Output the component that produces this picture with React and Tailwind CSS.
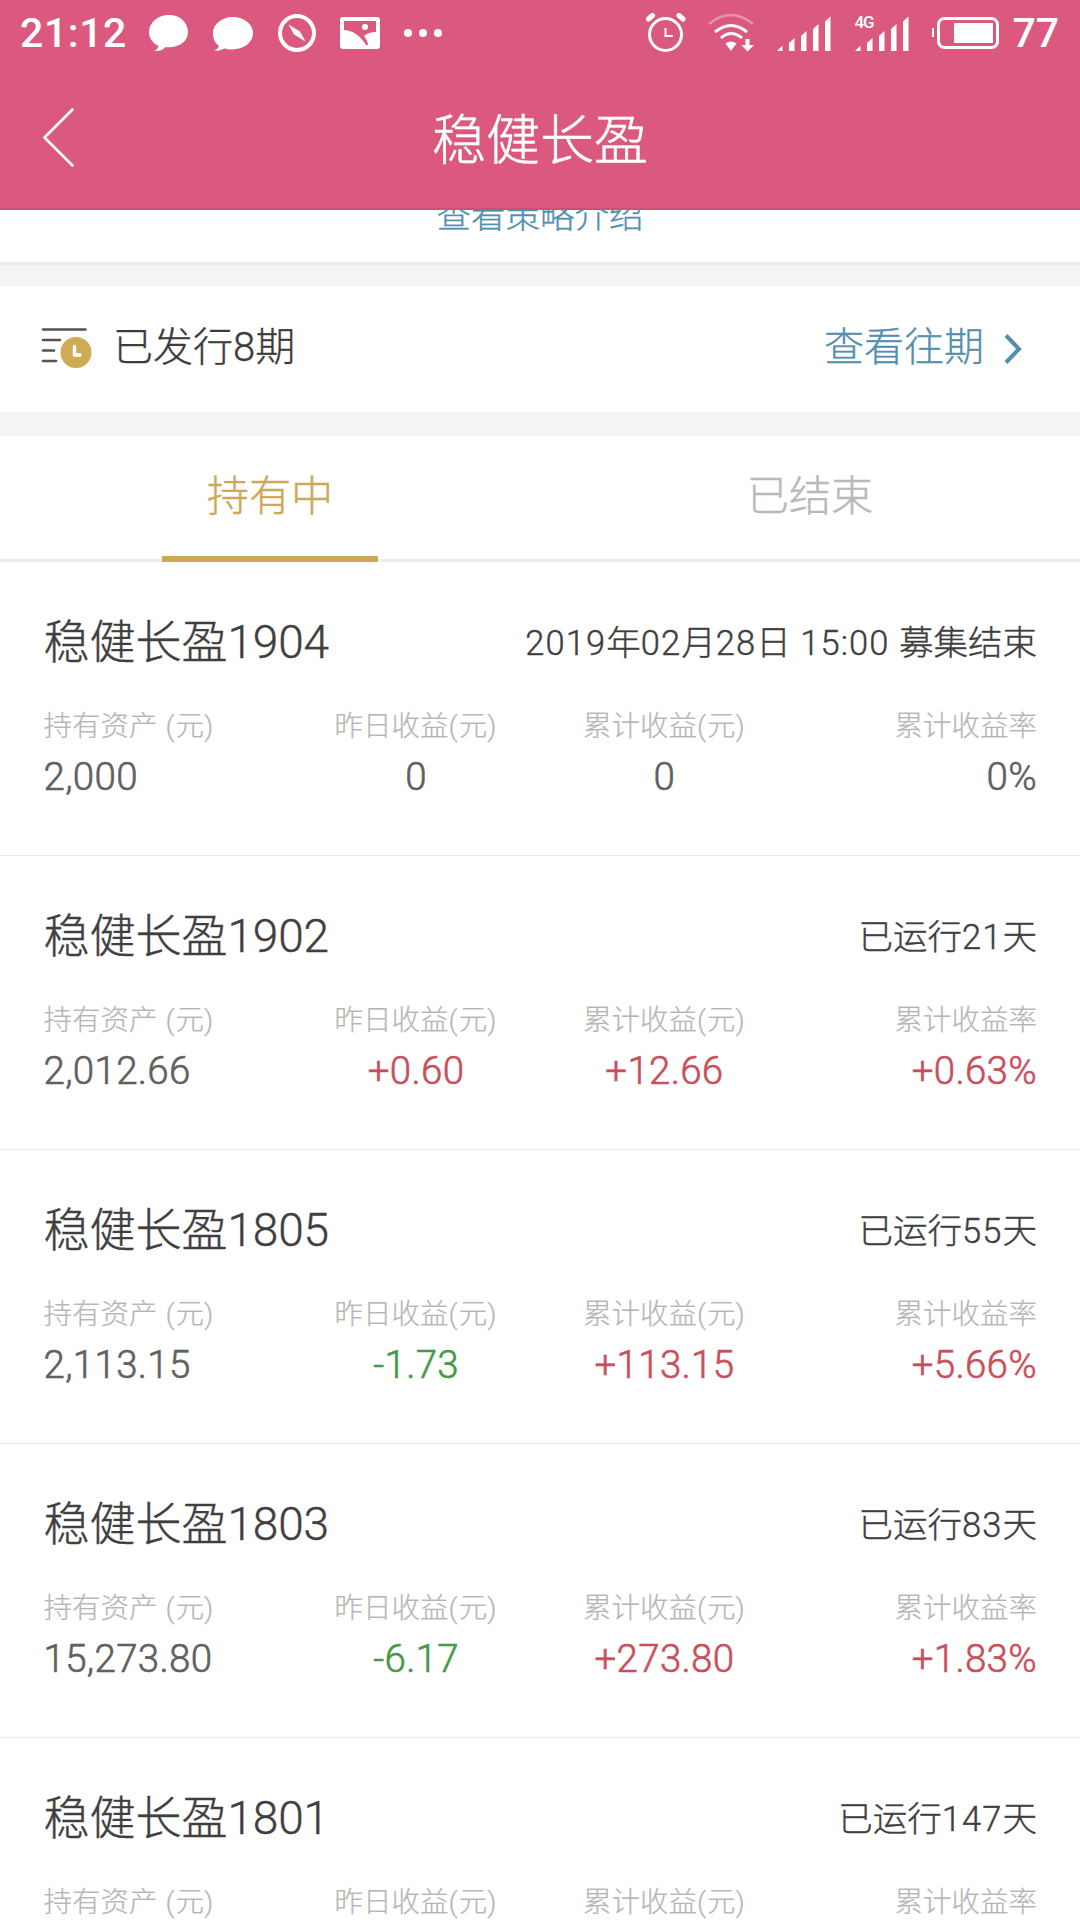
const holdings = [
  { name: '稳健长盈1904', status: '2019年02月28日 15:00 募集结束', asset: '2,000', daily: '0', total: '0', rate: '0%' },
  { name: '稳健长盈1902', status: '已运行21天', asset: '2,012.66', daily: '+0.60', total: '+12.66', rate: '+0.63%' },
  { name: '稳健长盈1805', status: '已运行55天', asset: '2,113.15', daily: '-1.73', total: '+113.15', rate: '+5.66%' },
  { name: '稳健长盈1803', status: '已运行83天', asset: '15,273.80', daily: '-6.17', total: '+273.80', rate: '+1.83%' },
  { name: '稳健长盈1801', status: '已运行147天' },
]

const valueColor = (value = '') => {
  if (value.startsWith('+')) return 'text-[#c94f5b]'
  if (value.startsWith('-')) return 'text-[#459a48]'
  return 'text-[#606060]'
}

// digits and brackets get their own tracking inside the Chinese text
const MixedText = ({ text, latin }) =>
  text.split(/([\d:() ]+)/).map((part, i) => (
    <span key={i} className={i % 2 ? latin : ''}>
      {part}
    </span>
  ))

const SignalBars = () => (
  <svg width="55" height="36" viewBox="0 0 55 36" fill="#fff">
    <path d="M0 35l5.500-5.500V35zM12 35v-8l5.500-5v13zM24 35V20l5.500-5v20zM36 35V13l5.500-5v27zM48 35V5.500l5.500-5V35z" />
  </svg>
)

const StatusBar = () => (
  <div className="flex h-[66px] items-center text-white">
    <span className="ml-5 w-[129px] text-[41px] leading-[66px] font-medium tracking-[0.6px]">21:12</span>
    <svg className="-mt-px" width="42" height="40" viewBox="0 0 42 40" fill="#fff">
      <path d="M20 2C9 2 0 9.500 0 19c0 6 3.500 11 9.500 14C9 35.500 7.500 37 5 38c5 .6 9-1 11.500-4C29 35.500 39 29 39 19 39 9.500 31 2 20 2z" />
    </svg>
    <svg className="ml-[22px]" width="42" height="40" viewBox="0 0 42 40" fill="#fff">
      <path d="M20 4C9 4 0 11 0 20c0 6 2 10 6 13-1 2-2.500 3.500-5 4.500 4.500.5 8-.5 10.500-2C26 39 40 32 40 20 40 11 31 4 20 4z" />
    </svg>
    <svg className="ml-[23px]" width="38" height="38" viewBox="0 0 38 38">
      <circle cx="19" cy="19" r="17" fill="none" stroke="#fff" strokeWidth="4" />
      <path d="M10.500 10.500L22 17.500 27.500 27.500 16 20.500z" fill="#fff" />
    </svg>
    <svg className="ml-6" width="40" height="32" viewBox="0 0 40 32">
      <rect width="40" height="32" rx="3" fill="#fff" />
      <path d="M4 4h32v11c-5 0-9 1.500-12 4 2 3 4 6 4 9h-2C21 20 14 13.500 4 13z" fill="#db597e" />
      <circle cx="25" cy="10" r="3" fill="#fff" />
    </svg>
    <svg className="ml-6" width="39" height="10" viewBox="0 0 39 10" fill="#fff">
      <circle cx="4" cy="5" r="4" />
      <circle cx="19" cy="5" r="4" />
      <circle cx="34" cy="5" r="4" />
    </svg>

    <svg className="ml-auto" width="42" height="40" viewBox="0 0 42 40" fill="none" stroke="#fff" strokeLinecap="round">
      <circle cx="19.500" cy="21.500" r="16" strokeWidth="3" />
      <path d="M2.500 6l4-3.500M37 6l-4-3.500" strokeWidth="5" />
      <path d="M19.500 15v8h7.500" strokeWidth="2" strokeLinecap="butt" />
    </svg>
    <svg className="ml-5" width="48" height="40" viewBox="0 0 48 40" fill="none" stroke="#fff" strokeWidth="3">
      <path d="M1 11Q23-7 45 11" strokeWidth="2.500" opacity=".35" />
      <path d="M7 19q16-13 32 0M13 25q10-9 21 0" />
      <path d="M23 38l-5.500-7.500q5.500-4 11 0z" fill="#fff" stroke="none" />
      <path d="M37.500 26h4v6h4.500l-6.500 6.500-6-6.500h4z" fill="#fff" stroke="none" />
    </svg>
    <div className="mt-px ml-[21px] h-9">
      <SignalBars />
    </div>
    <div className="relative mt-px ml-[23px] h-9">
      <SignalBars />
      <span className="absolute -top-0.5 -left-px text-[17px] leading-4 font-medium tracking-[-1px]">4G</span>
    </div>
    <svg className="ml-[22px]" width="68" height="34" viewBox="0 0 68 34">
      <path d="M1 12v9" stroke="#fff" strokeWidth="2" />
      <rect x="6.500" y="2.500" width="59" height="29" rx="6" fill="none" stroke="#fff" strokeWidth="3" />
      <rect x="22" y="7" width="39" height="20" rx="1" fill="#fff" />
    </svg>
    <span className="mr-[21px] ml-3 text-[41px] leading-[66px] font-medium">77</span>
  </div>
)

const NavBar = () => (
  <div className="grid h-36 grid-cols-[1fr_auto_1fr] items-center border-b-2 border-[#cf5075] text-white">
    <svg className="mt-px ml-[42px]" width="34" height="62" viewBox="0 0 34 62" fill="none" stroke="#fff" strokeWidth="2.600" strokeLinecap="round" strokeLinejoin="round">
      <path d="M30.500 2.500L2.500 30.500 30.500 58.500" />
    </svg>
    <h1 className="mt-2.5 text-[54px] leading-[80px] [-webkit-text-stroke:0.5px]">稳健长盈</h1>
  </div>
)

const IssuedRow = () => (
  <div className="flex h-[126px] shrink-0 items-center bg-white pb-[3px] text-[40px]">
    <svg className="ml-[41px]" width="52" height="44" viewBox="0 0 52 44" fill="none" strokeLinecap="round">
      <path d="M2 3.500h42.500M2 14h17M2 24.500h11M2 35h13" stroke="#55524f" strokeWidth="2.600" />
      <circle cx="35" cy="26.500" r="15.500" fill="#cfab55" />
      <path d="M33.500 20.500V29H39" stroke="#fff" strokeWidth="3.500" strokeLinejoin="round" />
    </svg>
    <span className="ml-5 text-[#3c3c3c] [-webkit-text-stroke:0.35px]">已发行8期</span>
    <span className="ml-auto text-[#548fae] [-webkit-text-stroke:0.3px]">查看往期</span>
    <svg className="mt-0.5 mr-[58px] ml-5" width="18" height="32" viewBox="0 0 18 32" fill="none" stroke="#548fae" strokeWidth="4">
      <path d="M2 2.500L15 16 2 29.500" />
    </svg>
  </div>
)

const Tabs = () => (
  <div className="grid h-[126px] shrink-0 grid-cols-2 border-b-[3px] border-[#ececec] bg-white text-center text-[42.200px] leading-[122px] [-webkit-text-stroke:0.4px]">
    <div className="-mb-[3px] flex flex-col items-center text-[#cda955]">
      <span className="h-[120px]">持有中</span>
      <span className="h-1.5 w-[216px] bg-[#cda955]" />
    </div>
    <div className="text-[#b9b9b9]">已结束</div>
  </div>
)

const Metric = ({ label, value, className, color }) => (
  <div className={className}>
    <div className="text-[28.500px] leading-[44px] text-[#b6b6b4] [-webkit-text-stroke:0.2px]">
      <MixedText text={label} latin="tracking-[1px]" />
    </div>
    {value && <div className={`mt-0.5 text-[38.500px] leading-[52px] tracking-[0.3px] [-webkit-text-stroke:0.6px] ${color}`}>{value}</div>}
  </div>
)

const HoldingRow = ({ item }) => (
  <div className="h-[294px] shrink-0 border-b border-[#e9e9e9] bg-white pt-[50px] pr-[43px] pl-[43.500px]">
    <div className="flex h-[60px] items-center justify-between text-[#3f3f3f] [-webkit-text-stroke:0.4px]">
      <span className="text-[46px]">
        <MixedText text={item.name} latin="tracking-[-0.2px]" />
      </span>
      <span className="mt-[3px] text-[34.500px]">
        <MixedText text={item.status} latin="tracking-[1.1px]" />
      </span>
    </div>
    <div className="mt-[33px] grid grid-cols-4">
      <Metric label="持有资产 (元)" value={item.asset} color="text-[#606060]" />
      <Metric label="昨日收益(元)" value={item.daily} className="text-center" color={valueColor(item.daily)} />
      <Metric label="累计收益(元)" value={item.total} className="text-center" color={valueColor(item.total)} />
      <Metric label="累计收益率" value={item.rate} className="text-right" color={valueColor(item.rate)} />
    </div>
  </div>
)

const App = () => (
  <div className="flex h-[1920px] w-[1080px] flex-col overflow-hidden bg-[#f4f4f4] font-['Roboto','Noto_Sans_CJK_SC',sans-serif] font-light whitespace-nowrap">
    <header className="h-[210px] shrink-0 bg-[#db597e]">
      <StatusBar />
      <NavBar />
    </header>
    {/* link scrolled halfway under the header */}
    <div className="flex h-[52px] shrink-0 items-end justify-center overflow-hidden bg-white pb-[21px] text-[34.500px] leading-[50px] text-[#548fae] [-webkit-text-stroke:0.3px]">
      查看策略介绍
    </div>
    <div className="mb-[21px] h-[3px] shrink-0 bg-[#ebebeb]" />
    <IssuedRow />
    <div className="h-6 shrink-0" />
    <Tabs />
    {holdings.map((item) => (
      <HoldingRow key={item.name} item={item} />
    ))}
  </div>
)

export default App
